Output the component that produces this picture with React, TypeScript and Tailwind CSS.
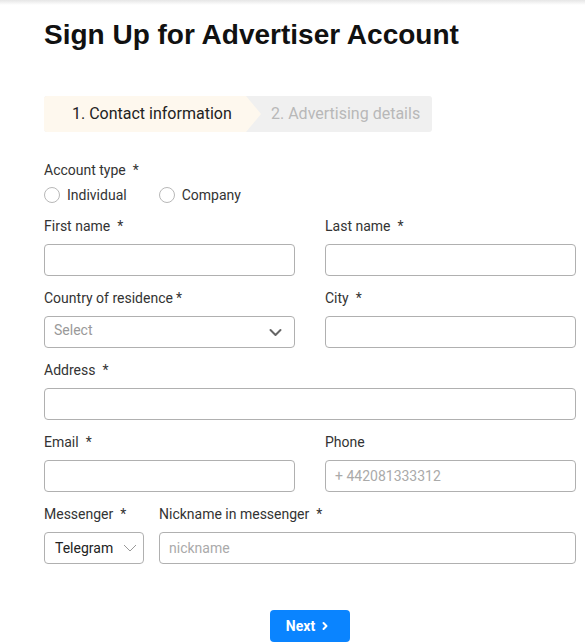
import React from "react";

const Label = ({ text, req = true, tight = false }: { text: string; req?: boolean; tight?: boolean }) => (
  <div className="h-5 leading-5 text-[14px] text-[#333]">
    {text}
    {req && <span className={tight ? "ml-[3px]" : "ml-[7px]"}>*</span>}
  </div>
);

const Input = ({ placeholder = "" }: { placeholder?: string }) => (
  <div className="mt-2 h-8 w-full rounded-[4px] border border-[#b0b0b0] px-[9px] text-[14px] leading-[30px] text-[#aaa]">
    {placeholder}
  </div>
);

const Radio = ({ text }: { text: string }) => (
  <div className="flex items-center gap-[7px]">
    <span className="h-4 w-4 rounded-full border border-[#b8b8b8] bg-white" />
    <span className="text-[14px] text-[#333]">{text}</span>
  </div>
);

export default function App() {
  return (
    <div className="min-h-[644px] bg-white" style={{ fontFamily: "Roboto, 'Liberation Sans', sans-serif" }}>
      <div className="h-[5px] bg-gradient-to-b from-[#e6e6e6] to-white" />
      <div className="w-[576px] pl-[44px]">
        <h1
          className="mt-[14px] text-[28px] font-bold leading-[32px] text-[#111]"
          style={{ fontFamily: "'Liberation Sans', Arial, sans-serif" }}
        >
          Sign Up for Advertiser Account
        </h1>

        <div className="mt-[45px] inline-flex h-9 items-center rounded-[3px] bg-[#f0f0f0]">
          <div className="flex h-9 w-[217px] items-center rounded-l-[3px] bg-[#fef8ee] pl-[28px] text-[16px] text-[#222] [clip-path:polygon(0_0,calc(100%-15px)_0,100%_50%,calc(100%-15px)_100%,0_100%)]">
            1. Contact information
          </div>
          <div className="pl-[10px] pr-[12px] text-[16px] text-[#b8b8b8]">2. Advertising details</div>
        </div>

        <div className="mt-[28px]">
          <Label text="Account type" />
          <div className="mt-[5px] flex h-5 items-center gap-[32px]">
            <Radio text="Individual" />
            <Radio text="Company" />
          </div>
        </div>

        <div className="mt-[11px] grid grid-cols-2 gap-x-[30px] gap-y-3">
          <div>
            <Label text="First name" />
            <Input />
          </div>
          <div>
            <Label text="Last name" />
            <Input />
          </div>
          <div>
            <Label text="Country of residence" tight />
            <div className="mt-2 flex h-8 w-full items-center justify-between rounded-[4px] border border-[#b0b0b0] pl-[9px] pr-[12px] text-[14px] text-[#999]">
              <span className="-mt-[3px]">Select</span>
              <svg width="13" height="9" viewBox="0 0 13 9" fill="none">
                <path d="M1.5 2 L6.5 7 L11.5 2" stroke="#666" strokeWidth="2" strokeLinecap="round" strokeLinejoin="round" />
              </svg>
            </div>
          </div>
          <div>
            <Label text="City" />
            <Input />
          </div>
          <div className="col-span-2">
            <Label text="Address" />
            <Input />
          </div>
          <div>
            <Label text="Email" />
            <Input />
          </div>
          <div>
            <Label text="Phone" req={false} />
            <Input placeholder="+ 442081333312" />
          </div>
        </div>

        <div className="mt-3 flex gap-[15px]">
          <div className="w-[100px]">
            <Label text="Messenger" />
            <div className="mt-2 flex h-8 w-full items-center justify-between rounded-[4px] border border-[#b0b0b0] pl-[10px] pr-[6px] text-[14px] text-[#222]">
              <span>Telegram</span>
              <svg width="14" height="8" viewBox="0 0 14 8" fill="none">
                <path d="M1 1 L7 7 L13 1" stroke="#999" strokeWidth="1" />
              </svg>
            </div>
          </div>
          <div className="flex-1">
            <Label text="Nickname in messenger" />
            <Input placeholder="nickname" />
          </div>
        </div>

        <div className="mt-[46px] flex justify-center">
          <button className="flex h-8 w-20 items-center justify-center gap-[7px] rounded-[4px] bg-[#0a84ff] pr-[6px] text-[14px] font-bold text-white">
            Next
            <svg width="6" height="10" viewBox="0 0 6 10" fill="none">
              <path d="M1.5 2 L4.5 5 L1.5 8" stroke="white" strokeWidth="2" strokeLinecap="round" strokeLinejoin="round" />
            </svg>
          </button>
        </div>
      </div>
    </div>
  );
}
